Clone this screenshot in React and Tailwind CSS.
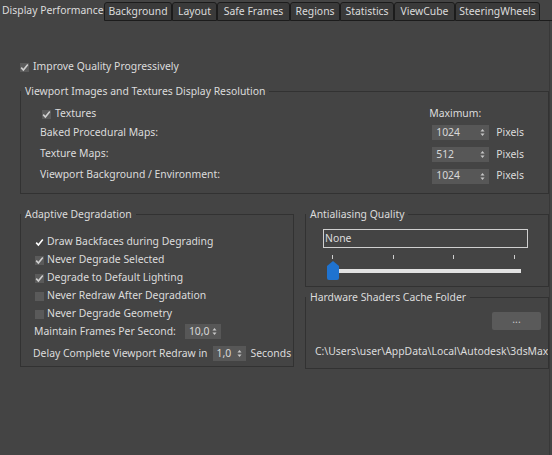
import React from "react";

const TABS = [
  { label: "Display Performance", w: "w-[104px]", active: true },
  { label: "Background", w: "w-[68px]" },
  { label: "Layout", w: "w-[45px]" },
  { label: "Safe Frames", w: "w-[73px]" },
  { label: "Regions", w: "w-[50px]" },
  { label: "Statistics", w: "w-[54px]" },
  { label: "ViewCube", w: "w-[61px]" },
  { label: "SteeringWheels", w: "w-[85px]" },
];

function Check({ checked, bright }) {
  return (
    <span
      className={`w-[9px] h-[9px] shrink-0 flex items-center justify-center ${
        bright ? "bg-transparent" : "bg-[#5a5a5a]"
      }`}
    >
      {checked && (
        <svg width="9" height="9" viewBox="0 0 9 9">
          <path
            d="M1.2 4.6 L3.4 7 L7.8 1.6"
            fill="none"
            stroke={bright ? "#ffffff" : "#d0d0d0"}
            strokeWidth="1.6"
          />
        </svg>
      )}
    </span>
  );
}

function Spinner({ value, w }) {
  return (
    <div className={`${w} h-[15px] shrink-0 bg-[#575757] flex items-center justify-between pl-[4px] pr-[4px]`}>
      <span className="text-[#d8d8d8]">{value}</span>
      <svg width="5" height="9" viewBox="0 0 5 9">
        <path d="M0.5 3.5 L2.5 1 L4.5 3.5 Z" fill="#c8c8c8" />
        <path d="M0.5 5.5 L2.5 8 L4.5 5.5 Z" fill="#c8c8c8" />
      </svg>
    </div>
  );
}

function Group({ title, className, children }) {
  return (
    <fieldset className={`min-w-0 border border-[#323232] ${className}`}>
      <legend className="px-[4px] leading-[14px] text-[#dcdcdc] whitespace-nowrap">{title}</legend>
      {children}
    </fieldset>
  );
}

export default function App() {
  return (
    <div
      className="w-[552px] h-[455px] bg-[#444444] text-[#dcdcdc] text-[10.4px] overflow-hidden flex flex-col whitespace-nowrap"
      style={{ fontFamily: '"Noto Sans", "Open Sans", sans-serif' }}
    >
      {/* tabs */}
      <div className="flex items-end h-[21px] shrink-0">
        {TABS.map((t) =>
          t.active ? (
            <div key={t.label} className={`${t.w} shrink-0 h-[21px] flex items-center pl-[2px] bg-[#444444]`}>
              {t.label}
            </div>
          ) : (
            <div
              key={t.label}
              className={`${t.w} shrink-0 h-[19px] flex items-center justify-center bg-[#3a3a3a] border border-[#1c1c1c] rounded-t-[3px]`}
            >
              {t.label}
            </div>
          )
        )}
        <div className="flex-1 h-[19px] border-b border-[#1c1c1c]" />
      </div>

      <div className="flex-1 mr-[2px] border-r border-[#383838] pt-[40px]">
        <label className="flex items-center gap-[4px] ml-[20px] h-[12px]">
          <Check checked />
          <span>Improve Quality Progressively</span>
        </label>

        <Group
          title="Viewport Images and Textures Display Resolution"
          className="ml-[20px] mt-[11px] h-[110px] pt-[9px]"
        >
          <div className="flex pl-[21px] pr-[24px] items-start">
            <div className="flex-1 flex flex-col">
              <label className="flex items-center gap-[4px] h-[14px]">
                <Check checked />
                <span>Textures</span>
              </label>
              <div className="mt-[5px] flex flex-col gap-[7px] -ml-[2px]">
                <div className="h-[14px] flex items-center">Baked Procedural Maps:</div>
                <div className="h-[14px] flex items-center">Texture Maps:</div>
                <div className="h-[14px] flex items-center">Viewport Background / Environment:</div>
              </div>
            </div>
            <div className="flex flex-col">
              <div className="h-[14px] flex items-center -ml-[3px]">Maximum:</div>
              <div className="mt-[4px] flex flex-col gap-[6px]">
                {["1024", "512", "1024"].map((v, i) => (
                  <div key={i} className="flex items-center gap-[7px]">
                    <Spinner value={v} w="w-[57px]" />
                    <span>Pixels</span>
                  </div>
                ))}
              </div>
            </div>
          </div>
        </Group>

        <div className="flex mt-[13px] gap-[11px] ml-[20px]">
          <Group title="Adaptive Degradation" className="w-[274px] shrink-0 h-[160px]">
            <div className="pt-[14px] pl-[14px]">
              <div className="flex flex-col gap-[4px]">
                {[
                  ["Draw Backfaces during Degrading", true, true],
                  ["Never Degrade Selected", true],
                  ["Degrade to Default Lighting", true],
                  ["Never Redraw After Degradation", false],
                  ["Never Degrade Geometry", false],
                ].map(([t, c, b]) => (
                  <label key={t} className="flex items-center gap-[3px] h-[14px]">
                    <Check checked={c} bright={b} />
                    <span>{t}</span>
                  </label>
                ))}
              </div>
              <div className="flex items-center gap-[9px] mt-[3px] -ml-[1px]">
                <span>Maintain Frames Per Second:</span>
                <Spinner value="10,0" w="w-[36px]" />
              </div>
              <div className="flex items-center gap-[5px] mt-[6px] -ml-[2px]">
                <span>Delay Complete Viewport Redraw in</span>
                <Spinner value="1,0" w="w-[33px]" />
                <span>Seconds</span>
              </div>
            </div>
          </Group>

          <div className="flex-1 min-w-0 flex flex-col gap-[3px]">
            <Group title="Antialiasing Quality" className="h-[80px]">
              <div className="pt-[8px] px-[17px]">
                <div className="w-[205px] h-[19px] border border-[#d0d0d0] flex items-center pl-[1px]">
                  None
                </div>
                <div className="relative w-[200px] h-[28px] mt-[2px]">
                  {[9, 70, 130, 191].map((x) => (
                    <span
                      key={x}
                      className="absolute top-[5px] w-px h-[4px] bg-[#cfcfcf]"
                      style={{ left: x }}
                    />
                  ))}
                  <span className="absolute left-[14px] right-[2px] top-[19px] h-[4px] bg-[#e2e2e2]" />
                  <svg className="absolute left-[4px] top-[11px]" width="12" height="19" viewBox="0 0 12 19">
                    <path d="M0 5 L6 0 L12 5 L12 17 Q12 19 10 19 L2 19 Q0 19 0 17 Z" fill="#1f73d0" />
                  </svg>
                </div>
              </div>
            </Group>
            <Group title="Hardware Shaders Cache Folder" className="h-[79px] overflow-hidden">
              <div className="pt-[8px]">
                <div className="flex justify-end pr-[7px]">
                  <button className="w-[49px] h-[18px] bg-[#5a5a5a] rounded-[2px] text-[#c8c8c8] leading-none pb-[3px]">
                    ...
                  </button>
                </div>
                <div className="mt-[14px] pl-[9px] overflow-hidden">
                  C:\Users\user\AppData\Local\Autodesk\3dsMax\2024 - 64bit\ENU\en-US\plugcfg
                </div>
              </div>
            </Group>
          </div>
        </div>
      </div>
    </div>
  );
}
